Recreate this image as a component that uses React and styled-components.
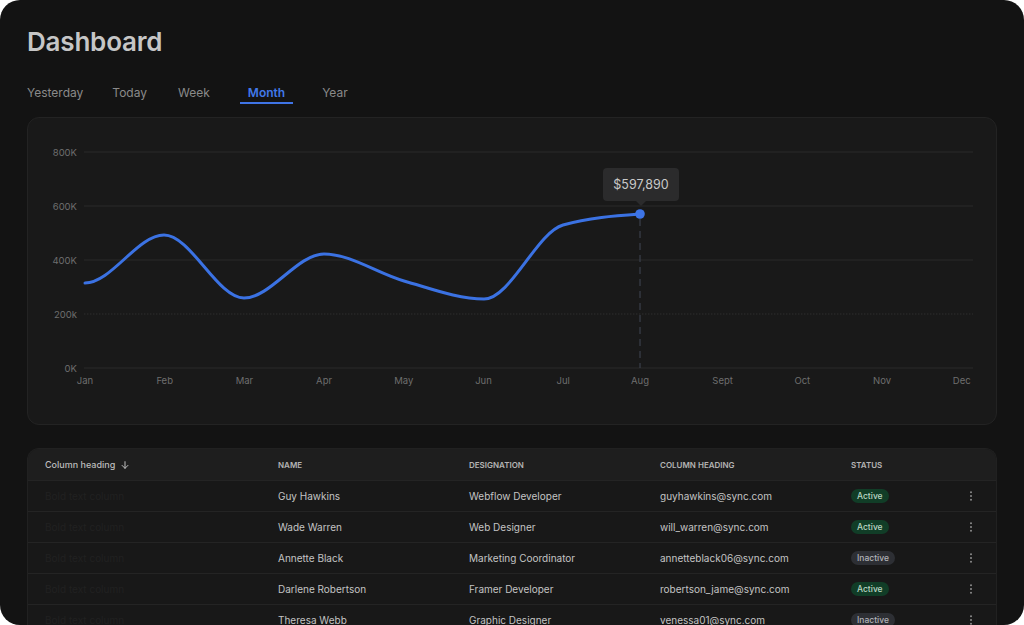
import React from "react";
import styled, { createGlobalStyle } from "styled-components";

const Global = createGlobalStyle`
  html, body { margin: 0; padding: 0; background: #ffffff; }
  body { font-family: Inter, "Noto Sans", sans-serif; -webkit-font-smoothing: antialiased; }
  * { box-sizing: border-box; }
`;

const Panel = styled.div`
  width: 1024px;
  height: 625px;
  background: #131313;
  border-radius: 20px;
  overflow: hidden;
  padding: 26px 27px 0 27px;
  display: flex;
  flex-direction: column;
`;

const Title = styled.h1`
  margin: 0;
  font-size: 26px;
  line-height: 32px;
  font-weight: 600;
  color: #c6c6c6;
  letter-spacing: -0.2px;
`;

const Tabs = styled.div`
  display: flex;
  margin: 21px 0 0 -8px;
`;

const Tab = styled.button`
  background: none;
  border: none;
  font-family: inherit;
  font-size: 12px;
  line-height: 16px;
  margin-left: ${(p) => p.$gap}px;
  padding: 6px 8px 1px;
  border-bottom: 2px solid ${(p) => (p.$active ? "#3f74e6" : "transparent")};
  color: ${(p) => (p.$active ? "#4179ea" : "#8a8a8a")};
  font-weight: ${(p) => (p.$active ? 600 : 400)};
  cursor: pointer;
`;

const ChartCard = styled.div`
  position: relative;
  margin-top: 13px;
  height: 308px;
  flex-shrink: 0;
  background: #191919;
  border: 1px solid #232323;
  border-radius: 12px;
`;

const ChartSvg = styled.svg`
  display: block;
  position: absolute;
  inset: -1px;
`;

const Tooltip = styled.div`
  position: absolute;
  top: 50px;
  width: 76px;
  height: 33px;
  background: #2b2b2c;
  border-radius: 4px;
  color: #c9c9c9;
  font-size: 12.5px;
  display: flex;
  align-items: center;
  justify-content: center;
  &::after {
    content: "";
    position: absolute;
    left: 50%;
    bottom: -5px;
    margin-left: -5px;
    border-left: 5px solid transparent;
    border-right: 5px solid transparent;
    border-top: 5px solid #2b2b2c;
  }
`;

const Table = styled.div`
  margin-top: 23px;
  background: #181818;
  border: 1px solid #212121;
  border-bottom: none;
  border-radius: 12px 12px 0 0;
  overflow: hidden;
  flex-shrink: 0;
`;

const Row = styled.div`
  display: grid;
  grid-template-columns: 233px 191px 191px 191px 1fr 50px;
  padding-left: 17px;
  align-items: center;
  height: ${(p) => (p.$head ? "32px" : "31px")};
  background: ${(p) => (p.$head ? "#1e1e1e" : "#181818")};
  border-bottom: 1px solid #242424;
`;

const HeadCell = styled.div`
  font-size: 8px;
  font-weight: 600;
  color: #b4b4b4;
  text-transform: ${(p) => (p.$plain ? "none" : "uppercase")};
  display: flex;
  align-items: center;
  gap: 5px;
  ${(p) => p.$plain && "font-size: 9px; font-weight: 500; color: #bdbdbd;"}
`;

const Cell = styled.div`
  font-size: 10px;
  color: ${(p) => (p.$faint ? "#212121" : "#c4c4c4")};
  white-space: nowrap;
`;

const Badge = styled.span`
  display: inline-flex;
  align-items: center;
  height: 14px;
  padding: 0 6px;
  border-radius: 7px;
  font-size: 8.5px;
  font-weight: 500;
  background: ${(p) => (p.$active ? "#113d27" : "#2d2f34")};
  color: ${(p) => (p.$active ? "#b9d6c3" : "#b1b3b8")};
`;

const Kebab = styled.div`
  display: flex;
  justify-content: center;
  color: #8c8c8c;
`;

const months = ["Jan", "Feb", "Mar", "Apr", "May", "Jun", "Jul", "Aug", "Sept", "Oct", "Nov", "Dec"];
const yTicks = [
  { label: "800K", y: 35 },
  { label: "600K", y: 89 },
  { label: "400K", y: 143 },
  { label: "200k", y: 197, dotted: true },
  { label: "0K", y: 251 },
];
const X0 = 58;
const STEP = 79.7;
const dataX = [58, 137, 217, 297, 377, 457, 536, 613];
const dataY = [166, 118, 181, 137, 164, 182, 108, 97];

function monotonePath(pts) {
  const n = pts.length;
  const t = new Array(n).fill(0);
  for (let i = 1; i < n - 1; i++) {
    const [x0, y0] = pts[i - 1];
    const [x1, y1] = pts[i];
    const [x2, y2] = pts[i + 1];
    const h0 = x1 - x0, h1 = x2 - x1;
    const s0 = (y1 - y0) / h0, s1 = (y2 - y1) / h1;
    const p = (s0 * h1 + s1 * h0) / (h0 + h1);
    t[i] = (Math.sign(s0) + Math.sign(s1)) * Math.min(Math.abs(s0), Math.abs(s1), 0.5 * Math.abs(p)) || 0;
  }
  t[0] = 0;
  {
    const [xa, ya] = pts[n - 2];
    const [xb, yb] = pts[n - 1];
    const h = xb - xa;
    t[n - 1] = (3 * (yb - ya) / h - t[n - 2]) / 2;
  }
  let d = `M${pts[0][0]},${pts[0][1]}`;
  for (let i = 0; i < n - 1; i++) {
    const [x0, y0] = pts[i];
    const [x1, y1] = pts[i + 1];
    const dx = (x1 - x0) / 3;
    d += ` C${x0 + dx},${y0 + dx * t[i]} ${x1 - dx},${y1 - dx * t[i + 1]} ${x1},${y1}`;
  }
  return d;
}

const points = dataY.map((y, i) => [dataX[i], y]);
const last = points[points.length - 1];

function Chart() {
  return (
    <ChartCard>
      <ChartSvg width="970" height="308" viewBox="0 0 970 308">
        {yTicks.map((t) => (
          <g key={t.label}>
            <line
              x1="57"
              x2="946"
              y1={t.y}
              y2={t.y}
              stroke={t.dotted ? "#2e2e2e" : "#2a2a2a"}
              strokeWidth="1.2"
              strokeDasharray={t.dotted ? "1.5 1.5" : undefined}
            />
            <text x="50" y={t.y + 3.5} textAnchor="end" fontSize="9.5" fill="#6e6e6e" fontFamily="Inter, sans-serif">
              {t.label}
            </text>
          </g>
        ))}
        {months.map((m, i) => (
          <text key={m} x={i === 7 ? 613 : X0 + i * STEP} y="266.5" textAnchor="middle" fontSize="9.5" fill="#6e6e6e" fontFamily="Inter, sans-serif">
            {m}
          </text>
        ))}
        <line x1={last[0]} x2={last[0]} y1={last[1] + 5} y2="251" stroke="#3b404b" strokeWidth="1.2" strokeDasharray="7 5" />
        <path d={monotonePath(points)} fill="none" stroke="#3b72e3" strokeWidth="3" strokeLinecap="round" />
        <circle cx={last[0]} cy={last[1]} r="4.8" fill="#3d74e6" />
      </ChartSvg>
      <Tooltip style={{ left: last[0] - 38 }}>$597,890</Tooltip>
    </ChartCard>
  );
}

const rows = [
  ["Guy Hawkins", "Webflow Developer", "guyhawkins@sync.com", true],
  ["Wade Warren", "Web Designer", "will_warren@sync.com", true],
  ["Annette Black", "Marketing Coordinator", "annetteblack06@sync.com", false],
  ["Darlene Robertson", "Framer Developer", "robertson_jame@sync.com", true],
  ["Theresa Webb", "Graphic Designer", "venessa01@sync.com", false],
];

const ArrowDownIcon = () => (
  <svg width="10" height="10" viewBox="0 0 24 24" fill="none" stroke="currentColor" strokeWidth="2.4" strokeLinecap="round" strokeLinejoin="round">
    <path d="M12 4v16" />
    <path d="M5 13l7 7 7-7" />
  </svg>
);

const DotsIcon = () => (
  <svg width="4" height="10" viewBox="0 0 4 10" fill="currentColor">
    <circle cx="2" cy="1.3" r="1" />
    <circle cx="2" cy="5" r="1" />
    <circle cx="2" cy="8.7" r="1" />
  </svg>
);

function DataTable() {
  return (
    <Table>
      <Row $head>
        <HeadCell $plain>
          Column heading <ArrowDownIcon />
        </HeadCell>
        <HeadCell>Name</HeadCell>
        <HeadCell>Designation</HeadCell>
        <HeadCell>Column heading</HeadCell>
        <HeadCell>Status</HeadCell>
        <HeadCell />
      </Row>
      {rows.map(([name, role, email, active]) => (
        <Row key={name}>
          <Cell $faint>Bold text column</Cell>
          <Cell>{name}</Cell>
          <Cell>{role}</Cell>
          <Cell>{email}</Cell>
          <Cell>
            <Badge $active={active}>{active ? "Active" : "Inactive"}</Badge>
          </Cell>
          <Kebab>
            <DotsIcon />
          </Kebab>
        </Row>
      ))}
    </Table>
  );
}

const tabs = [
  { label: "Yesterday", gap: 0 },
  { label: "Today", gap: 13 },
  { label: "Week", gap: 15 },
  { label: "Month", gap: 22 },
  { label: "Year", gap: 21 },
];

export default function App() {
  return (
    <>
      <Global />
      <Panel>
        <Title>Dashboard</Title>
        <Tabs>
          {tabs.map((t) => (
            <Tab key={t.label} $gap={t.gap} $active={t.label === "Month"}>
              {t.label}
            </Tab>
          ))}
        </Tabs>
        <Chart />
        <DataTable />
      </Panel>
    </>
  );
}
